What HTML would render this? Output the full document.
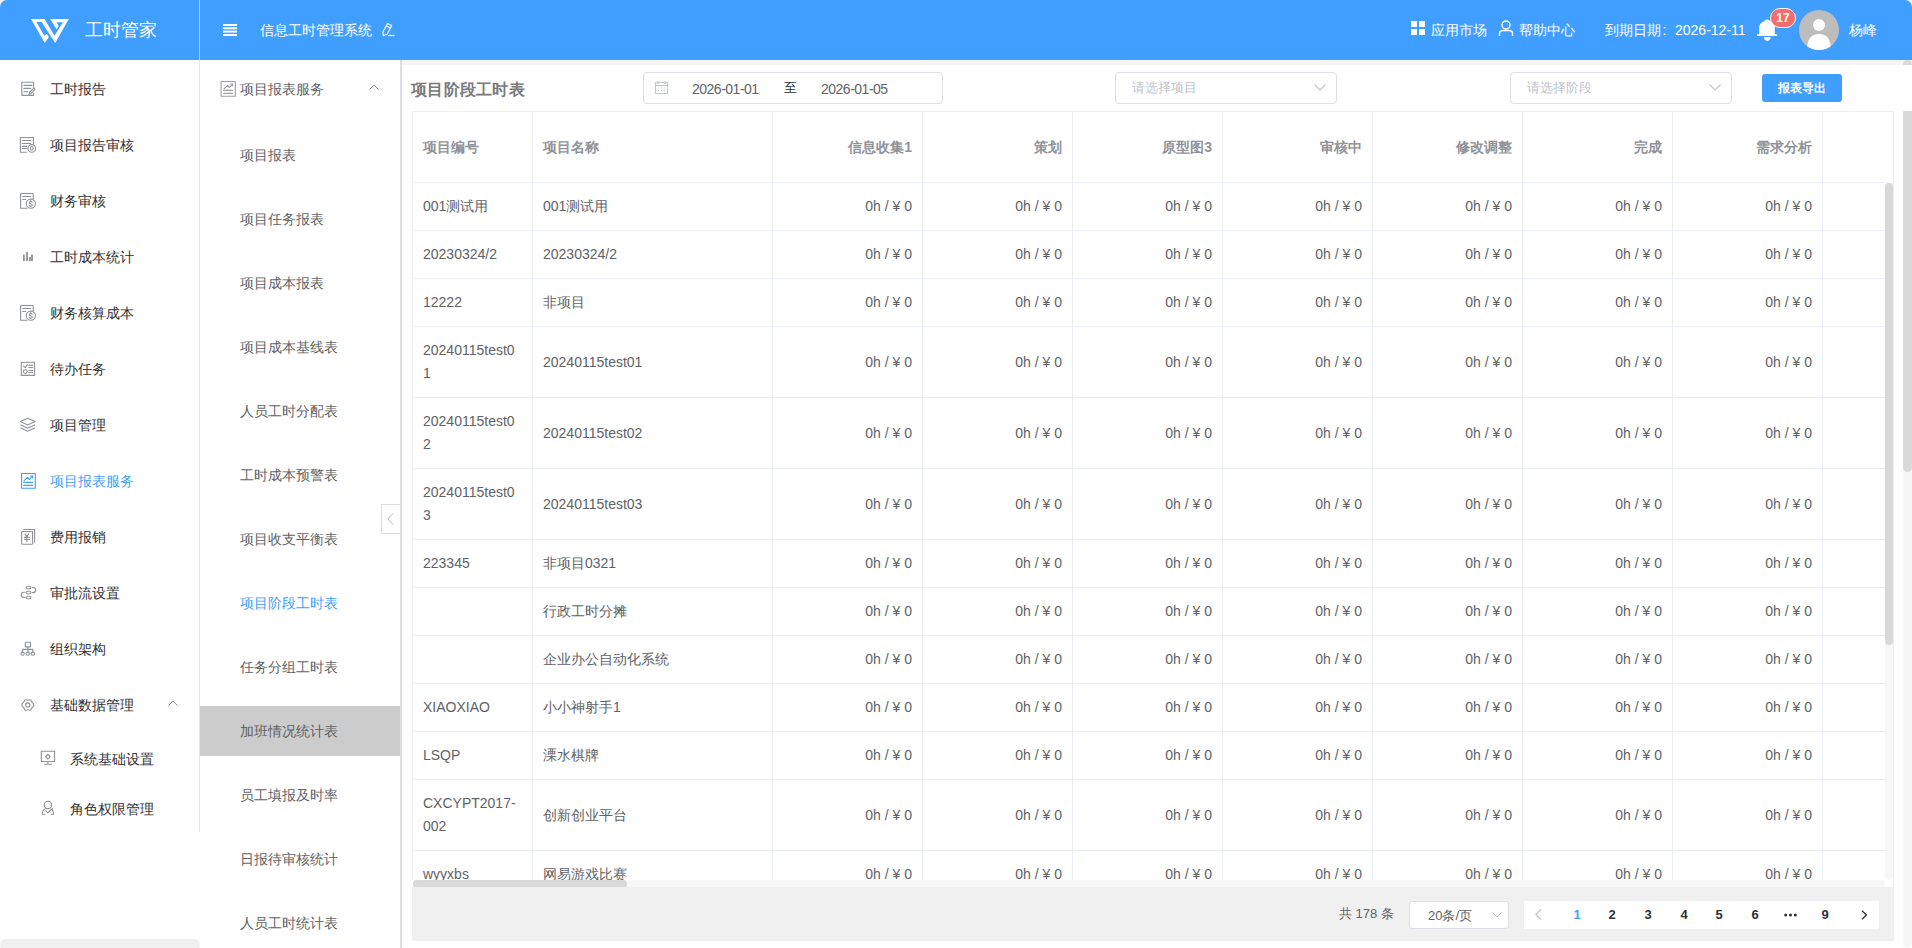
<!DOCTYPE html>
<html><head><meta charset="utf-8"><title>项目阶段工时表</title>
<style>
*{box-sizing:border-box}
html,body{margin:0;padding:0;width:1912px;height:948px;overflow:hidden;background:#fff;font-family:"Liberation Sans",sans-serif}
.a{position:absolute}
.t{position:absolute;white-space:nowrap;line-height:20px}
.hd{position:absolute;left:0;top:0;width:1912px;height:60px;background:#409eff;border-radius:7px 7px 0 0}
.ht{color:#fff;font-size:14px}
.lm{font-size:14px;color:#303133}
.mm{font-size:14px;color:#606266}
.ico{position:absolute}
table.g{border-collapse:collapse;table-layout:fixed;position:absolute;left:0;top:0;width:1460px}
table.g td{border:1px solid #ebeef5;padding:12px 10px;font-size:14px;color:#606266;line-height:23px;vertical-align:middle;word-break:break-all;overflow:hidden}
table.g td.r{text-align:right}
table.g th{border:1px solid #ebeef5;padding:12px 10px;font-size:14px;color:#909399;font-weight:bold;line-height:23px;text-align:left;vertical-align:middle;white-space:nowrap}
table.g th.r{text-align:right}
</style></head><body>

<div class="a" style="left:0;top:0;width:1912px;height:10px;background:#f4efe7"></div>
<div class="hd"></div>
<svg class="ico" style="left:28px;top:16px" width="44" height="30" viewBox="0 0 1390 948"><path d="M95 95 L525 95 L835 625 L1105 195 L905 195 L970 320 L905 415 L700 95 L1290 95 L860 855 L430 190 L265 190 L520 635 L590 560 L660 665 L530 855 Z" fill="#fff"/></svg>
<div class="t ht" style="left:85px;top:19px;font-size:18px;line-height:22px">工时管家</div>
<div class="a" style="left:199px;top:0;width:1px;height:60px;background:#b3cfea"></div>
<svg class="ico" style="left:223px;top:24px" width="14" height="12" viewBox="0 0 14 12"><rect x="0" y="0" width="14" height="2" fill="#fff"/><rect x="0" y="3.3" width="14" height="2" fill="#fff"/><rect x="0" y="6.6" width="14" height="2" fill="#fff"/><rect x="0" y="10" width="14" height="2" fill="#fff"/></svg>
<div class="t ht" style="left:260px;top:20px">信息工时管理系统</div>
<svg class="ico" style="left:376px;top:18px" width="24" height="24" viewBox="0 0 24 24" fill="none" stroke="#fff" stroke-width="1.1" stroke-linejoin="round"><path d="M11.5 5.6 L15.7 7.5 L11.1 16.3 L7.3 17.6 L6.9 13.9 Z"/><path d="M10.6 8.1 L14.6 10"/><path d="M12 17.5 H18.5" stroke-width="1.2"/></svg>
<svg class="ico" style="left:1411px;top:21px" width="14" height="14" viewBox="0 0 14 14" fill="#fff"><rect x="0" y="0" width="6" height="6"/><rect x="8" y="0" width="6" height="6"/><rect x="0" y="8" width="6" height="6"/><rect x="8" y="8" width="6" height="6"/></svg>
<div class="t ht" style="left:1431px;top:20px">应用市场</div>
<svg class="ico" style="left:1498px;top:20px" width="16" height="16" viewBox="0 0 16 16" fill="none" stroke="#fff" stroke-width="1.4"><circle cx="8" cy="5" r="4"/><path d="M1.5 16 V13.5 Q1.5 10.5 5 10.5 H11 Q14.5 10.5 14.5 13.5 V16"/></svg>
<div class="t ht" style="left:1519px;top:20px">帮助中心</div>
<div class="t ht" style="left:1605px;top:20px">到期日期<span style="display:inline-block;width:14px;padding-left:1.5px">:</span>2026-12-11</div>
<svg class="ico" style="left:1757px;top:19px" width="21" height="23" viewBox="0 0 21 23" fill="#fff"><path d="M2.2 15.2 V8.5 Q2.2 4 6.2 3 Q8.5 0.3 10.2 0.3 Q12 0.3 14.2 3 Q17.8 4 17.8 8.5 V15.2 H20.2 V17 H0.1 V15.2 Z"/><path d="M7 18.1 H13.6 Q13.6 21.9 10.3 21.9 Q7 21.9 7 18.1 Z"/></svg>
<div class="a" style="left:1770px;top:8px;width:26px;height:20px;border-radius:10px;background:#f56c6c;border:1px solid #fff;color:#fff;font-size:12px;font-weight:bold;line-height:18px;text-align:center">17</div>
<div class="a" style="left:1799px;top:10px;width:40px;height:40px;border-radius:50%;background:#bdbdbd;overflow:hidden"><svg width="40" height="40" viewBox="0 0 40 40" fill="#fff"><circle cx="20" cy="15" r="6"/><path d="M8 40 Q8 24 20 24 Q32 24 32 40Z"/></svg></div>
<div class="t ht" style="left:1849px;top:20px">杨峰</div>
<div class="a" style="left:199px;top:60px;width:1px;height:772px;background:#e6e6e6"></div>
<div class="t lm" style="left:50px;top:79px;color:#303133">工时报告</div>
<svg class="ico" style="left:16px;top:78px" width="24" height="22" viewBox="0 0 24 22" fill="none" stroke="#8f9297" stroke-width="1.1" stroke-linecap="round" stroke-linejoin="round"><path d="M17.6 9.6 V4.3 H5.8 V17.4 H17.6 V15.3"/><path d="M7.9 7.4 H15.8 M7.9 10.4 H14.8 M7.9 13.7 H11.6"/><path d="M13 16.3 L13.4 14.5 L17.8 10.1 L19.1 11.4 L14.7 15.8 Z"/></svg>
<div class="t lm" style="left:50px;top:135px;color:#303133">项目报告审核</div>
<svg class="ico" style="left:16px;top:134px" width="24" height="22" viewBox="0 0 24 22" fill="none" stroke="#8f9297" stroke-width="1.1" stroke-linecap="round" stroke-linejoin="round"><path d="M17.4 9.7 V3.5 H4.4 V18.3 H10.4"/><path d="M6.3 6.5 H14.6 M6.3 9.5 H14.6 M6.3 12.4 H10.9 M6.3 14.5 H10.9"/><circle cx="15.8" cy="14.4" r="3.8"/><ellipse cx="15.8" cy="14.4" rx="1.3" ry="1.9"/></svg>
<div class="t lm" style="left:50px;top:191px;color:#303133">财务审核</div>
<svg class="ico" style="left:16px;top:190px" width="24" height="22" viewBox="0 0 24 22" fill="none" stroke="#8f9297" stroke-width="1.1" stroke-linecap="round" stroke-linejoin="round"><path d="M17.2 9 V3.5 H4.6 V18.3 H11.1"/><path d="M6.7 6.5 H14.8 M6.7 9.5 H9.7"/><circle cx="14.8" cy="13.7" r="4.6"/><path d="M16.2 12 Q15.8 11.2 14.8 11.2 Q13.4 11.2 13.4 12.4 Q13.4 13.4 14.8 13.7 Q16.3 14 16.3 15.1 Q16.3 16.2 14.8 16.2 Q13.7 16.2 13.3 15.4 M14.8 10.6 V11.2 M14.8 16.2 V16.8"/></svg>
<div class="t lm" style="left:50px;top:247px;color:#303133">工时成本统计</div>
<svg class="ico" style="left:16px;top:246px" width="24" height="22" viewBox="0 0 24 22" fill="none" stroke="#8f9297" stroke-width="1.1" stroke-linecap="round" stroke-linejoin="round"><g fill="#8f9297" stroke="none"><rect x="7" y="8.6" width="1.8" height="6.5"/><rect x="10.1" y="6" width="1.8" height="9.1"/><rect x="13" y="11.1" width="1.8" height="4"/><rect x="15.1" y="8.6" width="1.8" height="6.5"/></g></svg>
<div class="t lm" style="left:50px;top:303px;color:#303133">财务核算成本</div>
<svg class="ico" style="left:16px;top:302px" width="24" height="22" viewBox="0 0 24 22" fill="none" stroke="#8f9297" stroke-width="1.1" stroke-linecap="round" stroke-linejoin="round"><path d="M17.2 9 V3.5 H4.6 V18.3 H11.1"/><path d="M6.7 6.5 H14.8 M6.7 9.5 H9.7"/><circle cx="14.8" cy="13.7" r="4.6"/><path d="M16.2 12 Q15.8 11.2 14.8 11.2 Q13.4 11.2 13.4 12.4 Q13.4 13.4 14.8 13.7 Q16.3 14 16.3 15.1 Q16.3 16.2 14.8 16.2 Q13.7 16.2 13.3 15.4 M14.8 10.6 V11.2 M14.8 16.2 V16.8"/></svg>
<div class="t lm" style="left:50px;top:359px;color:#303133">待办任务</div>
<svg class="ico" style="left:16px;top:358px" width="24" height="22" viewBox="0 0 24 22" fill="none" stroke="#8f9297" stroke-width="1.1" stroke-linecap="round" stroke-linejoin="round"><rect x="5.3" y="4.3" width="13.3" height="13.1"/><path d="M7.4 8.1 L9.2 9.6 L11.4 6.7"/><path d="M12.8 7.4 H16.7 M12.8 9.5 H16.7 M12.8 12.5 H16.7 M12.8 14.5 H16.7"/><circle cx="9.3" cy="13.6" r="1.9"/></svg>
<div class="t lm" style="left:50px;top:415px;color:#303133">项目管理</div>
<svg class="ico" style="left:16px;top:414px" width="24" height="22" viewBox="0 0 24 22" fill="none" stroke="#8f9297" stroke-width="1.1" stroke-linecap="round" stroke-linejoin="round"><path d="M4.4 7.4 L11.6 4.3 L19.3 7.4 L11.6 10.9 Z"/><path d="M4.9 10.9 L11.6 14.2 L18.6 10.9"/><path d="M4.9 13.9 L11.6 17.3 L18.6 13.9"/></svg>
<div class="t lm" style="left:50px;top:471px;color:#409eff">项目报表服务</div>
<svg class="ico" style="left:16px;top:470px" width="24" height="22" viewBox="0 0 24 22" fill="none" stroke="#409eff" stroke-width="1.1" stroke-linecap="round" stroke-linejoin="round"><rect x="5.6" y="3.5" width="13.7" height="14.8"/><path d="M8.1 10.7 L11.4 7.3 L13.5 9.5 L16.4 6.3"/><path d="M14.6 6 L16.6 6 L16.6 8"/><path d="M7.7 12.4 H16.7 M7.7 15.4 H16.7"/></svg>
<div class="t lm" style="left:50px;top:527px;color:#303133">费用报销</div>
<svg class="ico" style="left:16px;top:526px" width="24" height="22" viewBox="0 0 24 22" fill="none" stroke="#8f9297" stroke-width="1.1" stroke-linecap="round" stroke-linejoin="round"><rect x="5.6" y="5.5" width="10.9" height="12.8" rx="0.6"/><path d="M7.7 3.5 H18.6 V16.2"/><path d="M9 8.1 L10.8 10.6 L12.6 8.1 M8.4 11.4 H13.4 M8.4 13.5 H13.4 M10.8 10.6 V15.8"/></svg>
<div class="t lm" style="left:50px;top:583px;color:#303133">审批流设置</div>
<svg class="ico" style="left:16px;top:582px" width="24" height="22" viewBox="0 0 24 22" fill="none" stroke="#8f9297" stroke-width="1.1" stroke-linecap="round" stroke-linejoin="round"><rect x="10.2" y="4.3" width="4.6" height="2.4" rx="1.2"/><rect x="10.2" y="9.3" width="4.6" height="2.5" rx="1.2"/><rect x="10.2" y="14.2" width="4.6" height="2.5" rx="1.2"/><path d="M16.2 5.5 H17 Q19.7 5.5 19.7 8 Q19.7 10.6 17 10.6 H16.2"/><path d="M8.8 10.3 H8 Q5.2 10.3 5.2 12.9 Q5.2 15.4 8 15.4 H8.8"/></svg>
<div class="t lm" style="left:50px;top:639px;color:#303133">组织架构</div>
<svg class="ico" style="left:16px;top:638px" width="24" height="22" viewBox="0 0 24 22" fill="none" stroke="#8f9297" stroke-width="1.1" stroke-linecap="round" stroke-linejoin="round"><rect x="9.3" y="4.3" width="5.3" height="4.6" rx="0.5"/><path d="M11.9 8.9 V11.4 M6.6 13.9 V11.4 H16.8 V13.9 M11.9 11.4 V13.9"/><rect x="5.1" y="14.1" width="3.1" height="3.2" rx="1.2"/><rect x="10.3" y="14.1" width="3.1" height="3.2" rx="1.2"/><rect x="15.3" y="14.1" width="3.1" height="3.2" rx="1.2"/></svg>
<div class="t lm" style="left:50px;top:695px;color:#303133">基础数据管理</div>
<svg class="ico" style="left:16px;top:694px" width="24" height="22" viewBox="0 0 24 22" fill="none" stroke="#8f9297" stroke-width="1.1" stroke-linecap="round" stroke-linejoin="round"><path d="M8.7 6.2 Q9 5.6 9.8 5.8 Q11.8 6.6 13.8 5.8 Q14.6 5.6 14.9 6.2 Q15.2 8 16.8 9 Q17.6 9.4 17.6 10.2 V11.8 Q17.6 12.6 16.8 13 Q15.2 14 14.9 15.8 Q14.6 16.4 13.8 16.2 Q11.8 15.4 9.8 16.2 Q9 16.4 8.7 15.8 Q8.4 14 6.8 13 Q6 12.6 6 11.8 V10.2 Q6 9.4 6.8 9 Q8.4 8 8.7 6.2 Z"/><circle cx="11.8" cy="11" r="2.1"/></svg>
<svg class="ico" style="left:168px;top:700px" width="10" height="6" viewBox="0 0 10 6" fill="none" stroke="#909399" stroke-width="1"><path d="M0.5 5.5 L5 1 L9.5 5.5"/></svg>
<div class="t lm" style="left:70px;top:749px">系统基础设置</div>
<svg class="ico" style="left:36px;top:747px" width="24" height="22" viewBox="0 0 24 22" fill="none" stroke="#8f9297" stroke-width="1.1" stroke-linecap="round" stroke-linejoin="round"><rect x="5.3" y="4.3" width="13.3" height="10.2"/><path d="M11.9 14.5 V17.3 M8.6 17.3 H15.5"/><circle cx="11.9" cy="9.7" r="1.8"/><path d="M11.9 7.2 V7.9 M11.9 11.5 V12.2 M9.4 9.7 H10.1 M13.7 9.7 H14.4"/></svg>
<div class="t lm" style="left:70px;top:799px">角色权限管理</div>
<svg class="ico" style="left:36px;top:797px" width="24" height="22" viewBox="0 0 24 22" fill="none" stroke="#8f9297" stroke-width="1.1" stroke-linecap="round" stroke-linejoin="round"><circle cx="11.9" cy="7.9" r="3.7"/><path d="M9.3 11.8 Q6.3 13 6.3 17.3 H8.8"/><path d="M16 12.4 Q17.6 14 17.6 17.3 H15.1"/><path d="M9.7 13.9 L11.8 15.8 L16.5 11.4"/></svg>
<div class="a" style="left:0;top:939px;width:200px;height:12px;border-radius:6px;background:#f0f0f0"></div>
<div class="a" style="left:200px;top:706px;width:200px;height:50px;background:#cccccc"></div>
<div class="t mm" style="left:240px;top:79px;color:#606266">项目报表服务</div>
<svg class="ico" style="left:216px;top:78px" width="24" height="22" viewBox="0 0 24 22" fill="none" stroke="#9a9da2" stroke-width="1.1" stroke-linecap="round" stroke-linejoin="round"><rect x="5.1" y="3.5" width="14.2" height="14.8"/><path d="M7.9 10.9 L11.4 7.3 L13.5 9.5 L16.4 6.3"/><path d="M14.6 6 L16.6 6 L16.6 8"/><path d="M7.7 12.4 H16.7 M7.7 15.4 H16.7"/></svg>
<svg class="ico" style="left:369px;top:84px" width="10" height="6" viewBox="0 0 10 6" fill="none" stroke="#909399" stroke-width="1"><path d="M0.5 5.5 L5 1 L9.5 5.5"/></svg>
<div class="t mm" style="left:240px;top:145px;color:#606266">项目报表</div>
<div class="t mm" style="left:240px;top:209px;color:#606266">项目任务报表</div>
<div class="t mm" style="left:240px;top:273px;color:#606266">项目成本报表</div>
<div class="t mm" style="left:240px;top:337px;color:#606266">项目成本基线表</div>
<div class="t mm" style="left:240px;top:401px;color:#606266">人员工时分配表</div>
<div class="t mm" style="left:240px;top:465px;color:#606266">工时成本预警表</div>
<div class="t mm" style="left:240px;top:529px;color:#606266">项目收支平衡表</div>
<div class="t mm" style="left:240px;top:593px;color:#409eff">项目阶段工时表</div>
<div class="t mm" style="left:240px;top:657px;color:#606266">任务分组工时表</div>
<div class="t mm" style="left:240px;top:721px;color:#606266">加班情况统计表</div>
<div class="t mm" style="left:240px;top:785px;color:#606266">员工填报及时率</div>
<div class="t mm" style="left:240px;top:849px;color:#606266">日报待审核统计</div>
<div class="t mm" style="left:240px;top:913px;color:#606266">人员工时统计表</div>
<div class="a" style="left:400px;top:60px;width:2px;height:888px;background:#dddddd"></div>
<div class="a" style="left:381px;top:504px;width:20px;height:30px;border:1px solid #dddddd;background:#fff"></div>
<svg class="ico" style="left:387px;top:513px" width="7" height="12" viewBox="0 0 7 12" fill="none" stroke="#b0b3b8" stroke-width="1"><path d="M6 0.5 L0.8 6 L6 11.5"/></svg>
<div class="a" style="left:402px;top:60px;width:1510px;height:5px;background:#f5f5f5"></div>
<div class="a" style="left:1903px;top:60px;width:9px;height:888px;background:#f7f7f7;border-radius:0 0 5px 5px"></div>
<div class="a" style="left:1903px;top:60px;width:9px;height:412px;background:#dadada;border-radius:5px"></div>
<div class="a" style="left:402px;top:65px;width:1510px;height:46px;background:#fff"></div>
<div class="t" style="left:411px;top:80px;font-size:16px;color:#7a7a7a;font-weight:bold;line-height:20px;letter-spacing:0.3px">项目阶段工时表</div>
<div class="a" style="left:643px;top:72px;width:300px;height:32px;border:1px solid #dcdfe6;border-radius:4px"></div>
<svg class="ico" style="left:655px;top:81px" width="13" height="13" viewBox="0 0 13 13" fill="none" stroke="#c0c4cc" stroke-width="1"><rect x="0.5" y="1.5" width="12" height="11"/><path d="M3 0 V3 M10 0 V3 M0.5 4.5 H12.5 M3 7 H4 M6 7 H7 M9 7 H10 M3 9.5 H4 M6 9.5 H7 M9 9.5 H10"/></svg>
<div class="t" style="left:692px;top:79px;font-size:14px;letter-spacing:-0.5px;color:#606266">2026-01-01</div>
<div class="t" style="left:784px;top:78px;font-size:13px;color:#303133">至</div>
<div class="t" style="left:821px;top:79px;font-size:14px;letter-spacing:-0.5px;color:#606266">2026-01-05</div>
<div class="a" style="left:1115px;top:72px;width:222px;height:32px;border:1px solid #dcdfe6;border-radius:4px"></div>
<div class="t" style="left:1132px;top:78px;font-size:13px;color:#c0c4cc">请选择项目</div>
<svg class="ico" style="left:1314px;top:84px" width="12" height="7" viewBox="0 0 12 7" fill="none" stroke="#c0c4cc" stroke-width="1.2"><path d="M0.5 0.5 L6 6 L11.5 0.5"/></svg>
<div class="a" style="left:1510px;top:72px;width:222px;height:32px;border:1px solid #dcdfe6;border-radius:4px"></div>
<div class="t" style="left:1527px;top:78px;font-size:13px;color:#c0c4cc">请选择阶段</div>
<svg class="ico" style="left:1709px;top:84px" width="12" height="7" viewBox="0 0 12 7" fill="none" stroke="#c0c4cc" stroke-width="1.2"><path d="M0.5 0.5 L6 6 L11.5 0.5"/></svg>
<div class="a" style="left:1762px;top:74px;width:80px;height:28px;border-radius:3px;background:#409eff;color:#fff;font-size:12px;font-weight:bold;line-height:28px;text-align:center">报表导出</div>
<div class="a" style="left:412px;top:111px;width:1482px;height:777px;overflow:hidden;border:1px solid #ebeef5;border-top:none;border-left:none">
<div class="a" style="left:0;top:0;width:1481px;height:72px;overflow:hidden">
<table class="g"><colgroup><col style="width:120px"><col style="width:240px"><col style="width:150px"><col style="width:150px"><col style="width:150px"><col style="width:150px"><col style="width:150px"><col style="width:150px"><col style="width:150px"><col style="width:150px"></colgroup><tr style="height:72px">
<th>项目编号</th>
<th>项目名称</th>
<th class="r">信息收集1</th>
<th class="r">策划</th>
<th class="r">原型图3</th>
<th class="r">审核中</th>
<th class="r">修改调整</th>
<th class="r">完成</th>
<th class="r">需求分析</th>
<th class="r"></th>
</tr></table></div>
<div class="a" style="left:0;top:71px;width:1473px;height:698px;overflow:hidden">
<table class="g"><colgroup><col style="width:120px"><col style="width:240px"><col style="width:150px"><col style="width:150px"><col style="width:150px"><col style="width:150px"><col style="width:150px"><col style="width:150px"><col style="width:150px"><col style="width:150px"></colgroup>
<tr>
<td>001测试用</td><td>001测试用</td>
<td class="r">0h / ¥ 0</td>
<td class="r">0h / ¥ 0</td>
<td class="r">0h / ¥ 0</td>
<td class="r">0h / ¥ 0</td>
<td class="r">0h / ¥ 0</td>
<td class="r">0h / ¥ 0</td>
<td class="r">0h / ¥ 0</td>
<td class="r">0h / ¥ 0</td>
</tr>
<tr>
<td>20230324/2</td><td>20230324/2</td>
<td class="r">0h / ¥ 0</td>
<td class="r">0h / ¥ 0</td>
<td class="r">0h / ¥ 0</td>
<td class="r">0h / ¥ 0</td>
<td class="r">0h / ¥ 0</td>
<td class="r">0h / ¥ 0</td>
<td class="r">0h / ¥ 0</td>
<td class="r">0h / ¥ 0</td>
</tr>
<tr>
<td>12222</td><td>非项目</td>
<td class="r">0h / ¥ 0</td>
<td class="r">0h / ¥ 0</td>
<td class="r">0h / ¥ 0</td>
<td class="r">0h / ¥ 0</td>
<td class="r">0h / ¥ 0</td>
<td class="r">0h / ¥ 0</td>
<td class="r">0h / ¥ 0</td>
<td class="r">0h / ¥ 0</td>
</tr>
<tr>
<td>20240115test01</td><td>20240115test01</td>
<td class="r">0h / ¥ 0</td>
<td class="r">0h / ¥ 0</td>
<td class="r">0h / ¥ 0</td>
<td class="r">0h / ¥ 0</td>
<td class="r">0h / ¥ 0</td>
<td class="r">0h / ¥ 0</td>
<td class="r">0h / ¥ 0</td>
<td class="r">0h / ¥ 0</td>
</tr>
<tr>
<td>20240115test02</td><td>20240115test02</td>
<td class="r">0h / ¥ 0</td>
<td class="r">0h / ¥ 0</td>
<td class="r">0h / ¥ 0</td>
<td class="r">0h / ¥ 0</td>
<td class="r">0h / ¥ 0</td>
<td class="r">0h / ¥ 0</td>
<td class="r">0h / ¥ 0</td>
<td class="r">0h / ¥ 0</td>
</tr>
<tr>
<td>20240115test03</td><td>20240115test03</td>
<td class="r">0h / ¥ 0</td>
<td class="r">0h / ¥ 0</td>
<td class="r">0h / ¥ 0</td>
<td class="r">0h / ¥ 0</td>
<td class="r">0h / ¥ 0</td>
<td class="r">0h / ¥ 0</td>
<td class="r">0h / ¥ 0</td>
<td class="r">0h / ¥ 0</td>
</tr>
<tr>
<td>223345</td><td>非项目0321</td>
<td class="r">0h / ¥ 0</td>
<td class="r">0h / ¥ 0</td>
<td class="r">0h / ¥ 0</td>
<td class="r">0h / ¥ 0</td>
<td class="r">0h / ¥ 0</td>
<td class="r">0h / ¥ 0</td>
<td class="r">0h / ¥ 0</td>
<td class="r">0h / ¥ 0</td>
</tr>
<tr>
<td></td><td>行政工时分摊</td>
<td class="r">0h / ¥ 0</td>
<td class="r">0h / ¥ 0</td>
<td class="r">0h / ¥ 0</td>
<td class="r">0h / ¥ 0</td>
<td class="r">0h / ¥ 0</td>
<td class="r">0h / ¥ 0</td>
<td class="r">0h / ¥ 0</td>
<td class="r">0h / ¥ 0</td>
</tr>
<tr>
<td></td><td>企业办公自动化系统</td>
<td class="r">0h / ¥ 0</td>
<td class="r">0h / ¥ 0</td>
<td class="r">0h / ¥ 0</td>
<td class="r">0h / ¥ 0</td>
<td class="r">0h / ¥ 0</td>
<td class="r">0h / ¥ 0</td>
<td class="r">0h / ¥ 0</td>
<td class="r">0h / ¥ 0</td>
</tr>
<tr>
<td>XIAOXIAO</td><td>小小神射手1</td>
<td class="r">0h / ¥ 0</td>
<td class="r">0h / ¥ 0</td>
<td class="r">0h / ¥ 0</td>
<td class="r">0h / ¥ 0</td>
<td class="r">0h / ¥ 0</td>
<td class="r">0h / ¥ 0</td>
<td class="r">0h / ¥ 0</td>
<td class="r">0h / ¥ 0</td>
</tr>
<tr>
<td>LSQP</td><td>溧水棋牌</td>
<td class="r">0h / ¥ 0</td>
<td class="r">0h / ¥ 0</td>
<td class="r">0h / ¥ 0</td>
<td class="r">0h / ¥ 0</td>
<td class="r">0h / ¥ 0</td>
<td class="r">0h / ¥ 0</td>
<td class="r">0h / ¥ 0</td>
<td class="r">0h / ¥ 0</td>
</tr>
<tr>
<td>CXCYPT2017-002</td><td>创新创业平台</td>
<td class="r">0h / ¥ 0</td>
<td class="r">0h / ¥ 0</td>
<td class="r">0h / ¥ 0</td>
<td class="r">0h / ¥ 0</td>
<td class="r">0h / ¥ 0</td>
<td class="r">0h / ¥ 0</td>
<td class="r">0h / ¥ 0</td>
<td class="r">0h / ¥ 0</td>
</tr>
<tr>
<td>wyyxbs</td><td>网易游戏比赛</td>
<td class="r">0h / ¥ 0</td>
<td class="r">0h / ¥ 0</td>
<td class="r">0h / ¥ 0</td>
<td class="r">0h / ¥ 0</td>
<td class="r">0h / ¥ 0</td>
<td class="r">0h / ¥ 0</td>
<td class="r">0h / ¥ 0</td>
<td class="r">0h / ¥ 0</td>
</tr>
<tr>
<td></td><td></td>
<td class="r">0h / ¥ 0</td>
<td class="r">0h / ¥ 0</td>
<td class="r">0h / ¥ 0</td>
<td class="r">0h / ¥ 0</td>
<td class="r">0h / ¥ 0</td>
<td class="r">0h / ¥ 0</td>
<td class="r">0h / ¥ 0</td>
<td class="r">0h / ¥ 0</td>
</tr>
</table></div>
<div class="a" style="left:1473px;top:72px;width:8px;height:697px;background:#f7f7f7;border-radius:0 0 4px 4px"></div>
<div class="a" style="left:1473px;top:72px;width:8px;height:462px;background:#d9d9d9;border-radius:4px"></div>
<div class="a" style="left:1px;top:769px;width:1472px;height:8px;background:#f7f7f7;border-radius:0 4px 4px 0"></div>
<div class="a" style="left:1px;top:769px;width:214px;height:8px;background:#d9d9d9;border-radius:4px"></div>
</div>
<div class="a" style="left:412px;top:888px;width:1482px;height:53px;background:#f0f0f0"></div>
<div class="t" style="left:1339px;top:904px;font-size:13px;color:#606266">共 178 条</div>
<div class="a" style="left:1409px;top:901px;width:100px;height:28px;border:1px solid #dcdfe6;border-radius:3px;background:#fff"></div>
<div class="t" style="left:1428px;top:906px;font-size:13px;color:#606266">20条/页</div>
<svg class="ico" style="left:1492px;top:912px" width="10" height="6" viewBox="0 0 10 6" fill="none" stroke="#c0c4cc" stroke-width="1"><path d="M0.5 0.5 L5 5 L9.5 0.5"/></svg>
<div class="a" style="left:1524px;top:901px;width:355px;height:28px;background:#fff"></div>
<svg class="ico" style="left:1535px;top:909px" width="7" height="11" viewBox="0 0 7 11" fill="none" stroke="#c0c4cc" stroke-width="1.4"><path d="M6 0.5 L1 5.5 L6 10.5"/></svg>
<div class="t" style="left:1571px;width:12px;text-align:center;top:905px;font-size:13px;font-weight:bold;color:#409eff">1</div>
<div class="t" style="left:1606px;width:12px;text-align:center;top:905px;font-size:13px;font-weight:bold;color:#303133">2</div>
<div class="t" style="left:1642px;width:12px;text-align:center;top:905px;font-size:13px;font-weight:bold;color:#303133">3</div>
<div class="t" style="left:1678px;width:12px;text-align:center;top:905px;font-size:13px;font-weight:bold;color:#303133">4</div>
<div class="t" style="left:1713px;width:12px;text-align:center;top:905px;font-size:13px;font-weight:bold;color:#303133">5</div>
<div class="t" style="left:1749px;width:12px;text-align:center;top:905px;font-size:13px;font-weight:bold;color:#303133">6</div>
<div class="t" style="left:1819px;width:12px;text-align:center;top:905px;font-size:13px;font-weight:bold;color:#303133">9</div>
<svg class="ico" style="left:1784px;top:913px" width="13" height="4" viewBox="0 0 13 4" fill="#303133"><circle cx="1.7" cy="2" r="1.5"/><circle cx="6.5" cy="2" r="1.5"/><circle cx="11.3" cy="2" r="1.5"/></svg>
<svg class="ico" style="left:1861px;top:910px" width="7" height="10" viewBox="0 0 7 10" fill="none" stroke="#303133" stroke-width="1.3"><path d="M1 0.7 L5.4 5 L1 9.3"/></svg>
</body></html>
